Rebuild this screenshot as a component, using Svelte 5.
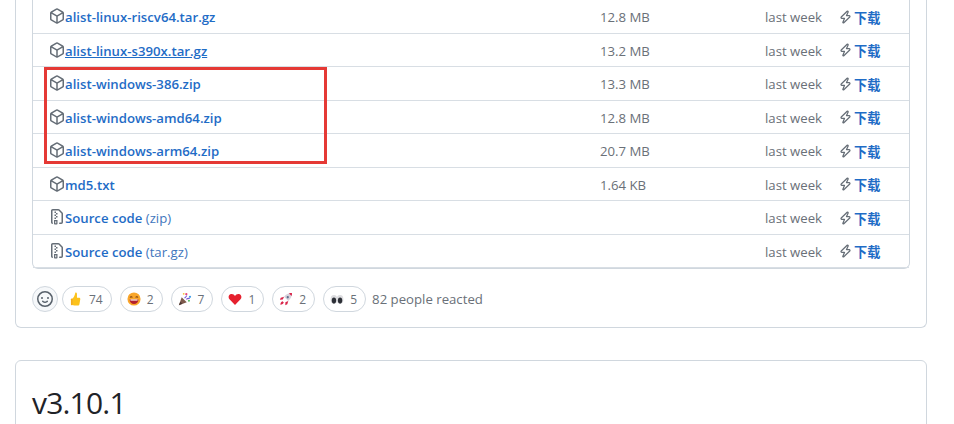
<script>
  const pkg = 'm8.878.392 5.25 3.045c.54.314.872.89.872 1.514v6.098a1.75 1.75 0 0 1-.872 1.514l-5.25 3.045a1.75 1.75 0 0 1-1.756 0l-5.25-3.045A1.75 1.75 0 0 1 1 11.049V4.951c0-.624.332-1.201.872-1.514L7.122.392a1.75 1.75 0 0 1 1.756 0ZM7.875 1.69l-4.63 2.685L8 7.133l4.755-2.758-4.63-2.685a.248.248 0 0 0-.25 0ZM2.5 5.677v5.372c0 .09.047.171.125.216l4.625 2.683V8.432Zm6.25 8.271 4.625-2.683a.25.25 0 0 0 .125-.216V5.677L8.75 8.432Z';
  // outline, zipper teeth and pull of the archive icon
  const zip = 'M3.75 0h5.586c.464 0 .909.185 1.237.513l2.914 2.914c.329.328.513.773.513 1.237v8.586A1.75 1.75 0 0 1 12.250 15h-1.500a.75.75 0 0 1 0-1.500h1.500a.25.25 0 0 0 .25-.25V4.664a.25.25 0 0 0-.073-.177L9.513 1.573a.25.25 0 0 0-.177-.073H3.750a.25.25 0 0 0-.25.25v11.500c0 .09.048.173.126.217a.75.75 0 0 1-.752 1.298A1.748 1.748 0 0 1 2 13.250V1.750C2 .784 2.784 0 3.750 0ZM5.500 2.500h1.500V4H5.500Zm1.500 1.500h1.500v1.500H7ZM5.500 5.500h1.500V7H5.500ZM7 7h1.500v1.500H7ZM5.500 8.500h1.500V10H5.500ZM5 11h3.500v3.750a.75.75 0 0 1-.75.750h-2a.75.75 0 0 1-.750-.750Zm1.250 1.250v2h1v-2Z';
  const zap = 'M9.504.43a1.516 1.516 0 0 1 2.437 1.713L10.415 5.5h2.123c1.57 0 2.346 1.909 1.22 3.004l-7.34 7.142a1.249 1.249 0 0 1-.871.354h-.302a1.25 1.25 0 0 1-1.157-1.723L5.633 10.5H3.462c-1.57 0-2.346-1.909-1.22-3.004L9.503.429Zm1.047 1.074L3.286 8.571A.25.25 0 0 0 3.462 9H6.75a.75.75 0 0 1 .694 1.034l-1.713 4.188 6.982-6.793A.25.25 0 0 0 12.538 7H9.25a.75.75 0 0 1-.683-1.06l2.008-4.418.003-.006a.036.036 0 0 0-.004-.009l-.006-.006-.008-.001c-.003 0-.006.002-.009.004Z';
  const smiley = 'M8 0a8 8 0 1 1 0 16A8 8 0 0 1 8 0ZM1.5 8a6.5 6.5 0 1 0 13 0 6.5 6.5 0 0 0-13 0Zm3.82 1.636a.75.75 0 0 1 1.038.175l.007.009c.103.118.22.222.35.31.264.178.683.37 1.285.37.602 0 1.02-.192 1.285-.371.13-.088.247-.192.35-.31l.007-.008a.75.75 0 0 1 1.222.87l-.022-.015c.02.013.021.015.021.015v.001l-.001.002-.002.003-.005.007-.014.019a2.066 2.066 0 0 1-.184.213c-.16.166-.338.316-.53.445-.63.418-1.37.638-2.127.629-.946 0-1.652-.308-2.126-.63a3.331 3.331 0 0 1-.715-.657l-.014-.02-.005-.006-.002-.003v-.002h-.001l.613-.432-.614.43a.75.75 0 0 1 .183-1.044ZM12 7a1 1 0 1 1-2 0 1 1 0 0 1 2 0ZM5 8a1 1 0 1 1 0-2 1 1 0 0 1 0 2Z';

  const assets = [
    { name: 'alist-linux-riscv64.tar.gz', size: '12.8 MB' },
    { name: 'alist-linux-s390x.tar.gz', size: '13.2 MB', hover: true },
    { name: 'alist-windows-386.zip', size: '13.3 MB' },
    { name: 'alist-windows-amd64.zip', size: '12.8 MB' },
    { name: 'alist-windows-arm64.zip', size: '20.7 MB' },
    { name: 'md5.txt', size: '1.64 KB' },
    { name: 'Source code', suffix: '(zip)', size: '' },
    { name: 'Source code', suffix: '(tar.gz)', size: '' }
  ];
  const reactions = [
    { kind: 'thumb', count: 74 },
    { kind: 'grin', count: 2 },
    { kind: 'party', count: 7 },
    { kind: 'heart', count: 1 },
    { kind: 'rocket', count: 2 },
    { kind: 'eyes', count: 5 }
  ];
</script>

<div class="page">
  <section class="card first">
    <div class="assets">
      {#each assets as a}
        <div class="row">
          <div class="name">
            <svg class="ico" viewBox="0 0 16 16"><path d={a.suffix ? zip : pkg} /></svg>
            <span class="link" class:hover={a.hover}>{a.name}</span>
            {#if a.suffix}<span class="suffix">&nbsp;{a.suffix}</span>{/if}
          </div>
          <div class="size">{a.size}</div>
          <div class="time">last week</div>
          <div class="dl">
            <svg class="zap" viewBox="0 0 16 16"><path d={zap} /></svg>
            <span>下载</span>
          </div>
        </div>
      {/each}
      <div class="highlight"></div>
    </div>

    <div class="reactions">
      <div class="add">
        <svg viewBox="0 0 16 16"><path d={smiley} /></svg>
      </div>
      {#each reactions as r}
        <div class="pill">
          <svg class="emoji" viewBox="0 0 16 16">
            {#if r.kind === 'thumb'}
              <path fill="#fcc21b" d="M7.200 .8c1-.4 1.900.3 1.900 1.500v4.200h2.400c1 0 1.600.8 1.400 1.800l-1 5.600c-.2.8-.8 1.400-1.700 1.400H6.200c-1 0-1.800-.3-2.400-.8V7.600c1.500-1.200 2.800-3.600 3.400-6.800Z" />
              <rect fill="#f4ad1c" x="2.200" y="7.500" width="2.200" height="7.700" rx=".8" />
            {:else if r.kind === 'grin'}
              <circle fill="#f9a62b" cx="8" cy="8" r="7.500" />
              <path fill="none" stroke="#7a3e12" stroke-width="1.200" d="M3.500 6.300c.6-1.200 2-1.200 2.600 0M9.900 6.300c.6-1.200 2-1.200 2.600 0" />
              <path fill="#b3202c" d="M3 8.500h10c0 3.300-2.300 5.200-5 5.200s-5-1.900-5-5.200Z" />
              <path fill="#fff" d="M4 8.500h8v1.300H4Z" />
            {:else if r.kind === 'party'}
              <path fill="#7d5a4c" d="M1 15 4.200 6l5.800 5.800Z" />
              <path fill="#4c3a36" d="M2.500 11 5 13.400 1 15Z" />
              <circle fill="#e8467c" cx="9.500" cy="2.500" r="1.300" />
              <circle fill="#3f9fe8" cx="13.700" cy="5.500" r="1.300" />
              <circle fill="#5bbf6a" cx="12.500" cy="10" r="1.200" />
              <circle fill="#f4c430" cx="6.500" cy="2" r="1" />
              <path stroke="#7a5cd6" stroke-width="1.200" fill="none" d="M7.500 7c1-1 2.300-1.800 2.500-3M9.500 8.500c1-1 2.500-1.500 4-1" />
            {:else if r.kind === 'heart'}
              <path fill="#e5202e" d="M8 14.800 1.700 8.300C-.2 6.300.6 2.500 3.800 2.200 5.600 2 7.100 3 8 4.500 8.900 3 10.400 2 12.200 2.200c3.200.3 4 4.100 2.100 6.100Z" />
            {:else if r.kind === 'rocket'}
              <path fill="#d8d2dc" d="M14.800 1.200c.2 3.600-1.200 6.600-4.200 9l-4.800-4.800c2.400-3 5.400-4.400 9-4.200Z" />
              <path fill="#d9254a" d="M14.800 1.200c.1 1.200 0 2.400-.4 3.400l-3-3c1-.4 2.200-.5 3.400-.4ZM5.800 5.400 2 6.500l-1 2.300 3.300-.1ZM10.600 10.200 9.500 14l-2.300 1 .1-3.300ZM4 10.500c-1.500.5-2.300 1.700-2.500 4 2.300-.2 3.500-1 4-2.500Z" />
              <circle fill="#5a6f8c" cx="10" cy="6" r="1.300" />
            {:else}
              <ellipse fill="#dcdcdf" cx="4.500" cy="8.500" rx="3.800" ry="5" />
              <ellipse fill="#dcdcdf" cx="11.500" cy="8.500" rx="3.800" ry="5" />
              <ellipse fill="#2c2f36" cx="4.500" cy="9.800" rx="2.500" ry="3.500" />
              <ellipse fill="#2c2f36" cx="11.500" cy="9.800" rx="2.500" ry="3.500" />
            {/if}
          </svg>
          <span class="count">{r.count}</span>
        </div>
      {/each}
      <span class="people">82 people reacted</span>
    </div>
  </section>

  <section class="card second">
    <h2>v3.10.1</h2>
  </section>
</div>

<style>
  :global(body) {
    margin: 0;
    background: #fff;
    overflow: hidden;
  }
  .page {
    box-sizing: border-box;
    height: 424px;
    overflow: hidden;
    padding: 0.250px 27px 0 15px;
    font-family: "Open Sans", "Noto Sans CJK SC", sans-serif;
    font-size: 13.200px;
    color: #6a7078;
  }
  .card {
    border: 1px solid #d0d7de;
    border-radius: 6px;
    padding: 0 16px;
  }
  .first {
    border-top: 0;
    border-radius: 0 0 6px 6px;
    padding-bottom: 15px;
  }
  .second {
    margin-top: 32px;
    padding-top: 24px;
    padding-bottom: 40px;
  }
  .assets {
    position: relative;
    border: 1px solid #d0d7de;
    border-top: 0;
    border-radius: 0 0 6px 6px;
  }
  .row {
    box-sizing: border-box;
    display: flex;
    align-items: center;
    height: 33.500px;
    padding: 1px 0 0 16px;
    border-bottom: 1px solid #d8dee4;
  }
  .row:last-of-type {
    border-bottom: 0;
  }
  .name {
    display: flex;
    align-items: center;
    width: 551px;
    white-space: nowrap;
  }
  .ico {
    width: 16px;
    height: 16px;
    flex: none;
    margin-top: -2px;
    fill: #656d76;
  }
  .link {
    color: #1f6cc6;
    font-weight: 600;
  }
  .link.hover {
    text-decoration: underline;
  }
  .suffix {
    font-weight: 400;
    color: #3f76bd;
  }
  .size {
    width: 165px;
  }
  .time {
    width: 74px;
  }
  .dl {
    display: flex;
    align-items: center;
    gap: 2px;
    color: #1f6cc6;
    font-weight: 700;
    white-space: nowrap;
  }
  .zap {
    width: 13px;
    height: 14px;
    margin-top: -1px;
    fill: #656d76;
  }
  .highlight {
    position: absolute;
    left: 11px;
    top: 67px;
    width: 277px;
    height: 91px;
    border: 3px solid #e53935;
  }
  .reactions {
    display: flex;
    align-items: center;
    gap: 8px;
    margin-top: 17px;
    height: 26px;
  }
  .add {
    box-sizing: border-box;
    display: flex;
    align-items: center;
    justify-content: center;
    width: 26px;
    height: 26px;
    margin-right: -4px;
    border: 1px solid #d0d7de;
    border-radius: 50%;
    background: #f6f8fa;
  }
  .add svg {
    width: 16px;
    height: 16px;
    fill: #57606a;
  }
  .pill {
    box-sizing: border-box;
    display: flex;
    align-items: center;
    gap: 6px;
    height: 26px;
    padding: 0 8px 0 6px;
    border: 1px solid #d0d7de;
    border-radius: 13px;
    font-size: 12px;
  }
  .emoji {
    width: 14px;
    height: 14px;
    flex: none;
  }
  .people {
    white-space: nowrap;
    margin-left: -2px;
  }
  h2 {
    margin: 0;
    font-size: 30px;
    line-height: 36px;
    font-weight: 500;
    letter-spacing: -0.800px;
    color: #1f2328;
  }
</style>
